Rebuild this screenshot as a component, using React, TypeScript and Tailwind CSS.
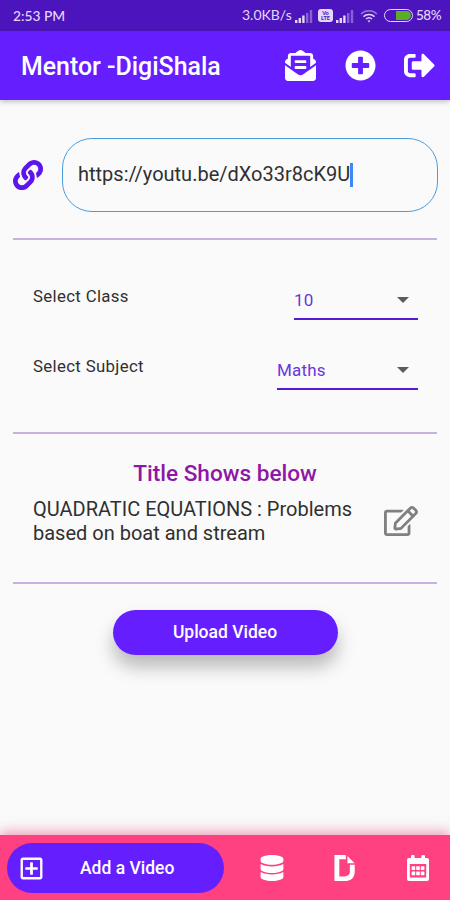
import React from "react";
import {
  FaEnvelopeOpenText,
  FaPlusCircle,
  FaSignOutAlt,
  FaLink,
  FaRegEdit,
  FaRegPlusSquare,
  FaDatabase,
  FaDochub,
} from "react-icons/fa";

function Signal() {
  return (
    <svg width="18" height="13" viewBox="0 0 18 13" fill="#e4d8fa">
      <rect x="0" y="10" width="2.4" height="3" />
      <rect x="3.6" y="8" width="2.4" height="5" />
      <rect x="7.2" y="5.5" width="2.4" height="7.5" />
      <rect x="11" y="3" width="2.4" height="10" opacity=".4" />
      <rect x="14.8" y="0" width="2.4" height="13" opacity=".4" />
    </svg>
  );
}

function CalendarIcon() {
  return (
    <svg className="ml-auto mr-[2px]" width="22" height="26" viewBox="0 0 22 26" fill="#fff">
      <path
        fillRule="evenodd"
        d="M2 3h2V1a1 1 0 0 1 1-1h1.6a1 1 0 0 1 1 1v2h6.8V1a1 1 0 0 1 1-1H17a1 1 0 0 1 1 1v2h2a2 2 0 0 1 2 2v19a2 2 0 0 1-2 2H2a2 2 0 0 1-2-2V5a2 2 0 0 1 2-2zM2.8 9v13.4h16.4V9z"
      />
      {[11.2, 16.4].map((y) =>
        [4.6, 9.2, 13.8].map((x) => <rect key={`${x}-${y}`} x={x} y={y} width="3.6" height="3.9" rx="0.5" />)
      )}
    </svg>
  );
}

function StatusBar() {
  return (
    <div className="flex h-[31px] shrink-0 items-center bg-[#4c14bc] pl-[13px] pr-[9px] font-['Lato',sans-serif] text-[#e4d8fa]">
      <span className="w-[53px] whitespace-nowrap text-[13.8px] font-medium leading-none">2:53 PM</span>
      <span className="-mt-px ml-auto w-[51px] whitespace-nowrap text-[14px] leading-none">3.0KB/s</span>
      <span className="ml-[2px] mt-px"><Signal /></span>
      <div className="ml-[5px] flex h-[13px] w-[15px] flex-col items-center justify-center rounded-[3px] bg-[#e4d8fa] text-[5.5px] font-black leading-[5px] text-[#4c14bc]">
        <span>Vo</span>
        <span>LTE</span>
      </div>
      <span className="ml-[3px] mt-px"><Signal /></span>
      <svg className="ml-[6px]" width="18" height="14" viewBox="0 0 18 14" fill="none" stroke="#e4d8fa" strokeWidth="1.5">
        <path d="M1 5a11.5 11.5 0 0 1 16 0" opacity=".5" />
        <path d="M3.5 7.6a8 8 0 0 1 11 0" />
        <path d="M6 10a4.6 4.6 0 0 1 6 0" />
        <path d="M7.5 11.5h3L9 13.5z" fill="#e4d8fa" stroke="none" />
      </svg>
      <div className="ml-[6px] flex h-[13px] w-[29px] items-center justify-end rounded-full border border-[#e4d8fa] p-px">
        <div className="h-[9px] w-[15px] rounded-r-full bg-[#5aae25]" />
      </div>
      <span className="ml-[3px] w-[25px] whitespace-nowrap text-[13.5px] font-medium leading-none tracking-[-0.5px]">58%</span>
    </div>
  );
}

function Divider() {
  return <div className="mx-[13px] h-[2px] shrink-0 bg-[#c5b4df]" />;
}

function Picker({ label, value, width }: { label: string; value: string; width: string }) {
  return (
    <div className="flex h-[70px] items-start justify-between pl-[33px] pr-8">
      <span className="mt-[11px] text-[16.8px] leading-6 tracking-[0.34px] text-[#303030]">{label}</span>
      <div className={`flex h-[47px] items-center justify-between border-b-2 border-[#561bd6] pr-[9px] pt-[8px] ${width}`}>
        <span className="text-[17px] leading-6 tracking-[0.2px] text-[#6b35dc]">{value}</span>
        <svg width="12" height="6" viewBox="0 0 12 6" fill="#5c5c5c">
          <path d="M0 0h12L6 6z" />
        </svg>
      </div>
    </div>
  );
}

export default function App() {
  return (
    <div className="flex h-[900px] w-[450px] flex-col overflow-hidden bg-[#fafafa] font-['Roboto',sans-serif]">
      <StatusBar />
      <header className="flex h-[69px] shrink-0 items-center bg-[#651fff] pl-[21px] pr-[15px] text-white shadow-[0_2px_5px_rgba(0,0,0,0.22)]">
        <h1 className="mt-[2px] text-[24.9px] font-medium leading-8">Mentor -DigiShala</h1>
        <FaEnvelopeOpenText className="ml-auto" size={31} />
        <FaPlusCircle className="ml-[29px]" size={31} />
        <FaSignOutAlt className="ml-7" size={31} />
      </header>
      <main className="flex flex-1 flex-col">
        <div className="mt-[38px] flex items-center pl-[13px] pr-3">
          <FaLink size={30} color="#5d14ed" />
          <div className="ml-[19px] flex h-[74px] flex-1 items-center rounded-[30px] border border-[#4c9cdc] pl-[15px] text-[20px] text-[#303030]">
            <span className="mt-[-2px]">https://youtu.be/dXo33r8cK9U</span>
            <span className="h-6 w-[3px] bg-[#4285f4]" />
          </div>
        </div>
        <div className="h-[26px] shrink-0" />
        <Divider />
        <div className="mt-[33px] h-[159px]">
          <Picker label="Select Class" value="10" width="w-[124px]" />
          <Picker label="Select Subject" value="Maths" width="w-[141px]" />
        </div>
        <Divider />
        <h2 className="mt-[25px] text-center text-[22.6px] font-medium leading-[30px] text-[#8e18a6]">Title Shows below</h2>
        <div className="mt-[8px] flex h-[85px] items-start pl-[33px] pr-8">
          <p className="w-[335px] text-[20px] leading-6 text-[#303030]">
            QUADRATIC EQUATIONS : Problems<br />based on boat and stream
          </p>
          <FaRegEdit className="ml-auto mt-[7px]" size={34} color="#808080" />
        </div>
        <Divider />
        <button className="mt-[26px] h-[45px] w-[225px] self-center rounded-full bg-[#651fff] text-[17.5px] font-medium text-white shadow-[0_12px_18px_rgba(0,0,0,0.26)]">
          Upload Video
        </button>
      </main>
      <nav className="flex h-[65px] shrink-0 items-center bg-[#ff4081] pl-[7px] pr-[19px] pt-px text-white shadow-[0_-3px_12px_rgba(225,64,115,0.5)]">
        <div className="flex h-[50px] w-[217px] items-center rounded-full bg-[#651fff] pl-[12px]">
          <FaRegPlusSquare size={25} />
          <span className="ml-[36px] text-[17.5px] font-medium">Add a Video</span>
        </div>
        <FaDatabase className="ml-[35px]" size={26} />
        <FaDochub className="ml-[47px]" size={26} />
        <CalendarIcon />
      </nav>
    </div>
  );
}
